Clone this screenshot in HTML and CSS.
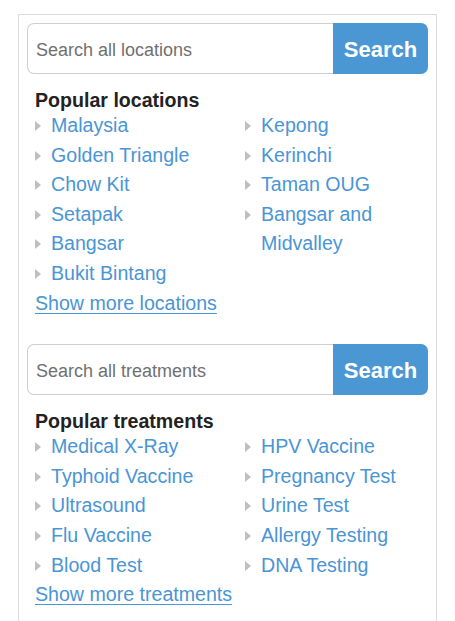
FILE: index.html
```html
<!DOCTYPE html>
<html lang="en">
<head>
<meta charset="utf-8">
<title>Popular locations and treatments</title>
<link rel="stylesheet" href="styles.css">
</head>
<body>
<div class="panel">
  <section class="block">
    <form class="search">
      <input class="search-input" type="text" placeholder="Search all locations">
      <button class="search-btn" type="button">Search</button>
    </form>
    <h2 class="heading">Popular locations</h2>
    <div class="cols">
      <ul class="col col-left">
        <li><a href="#">Malaysia</a></li>
        <li><a href="#">Golden Triangle</a></li>
        <li><a href="#">Chow Kit</a></li>
        <li><a href="#">Setapak</a></li>
        <li><a href="#">Bangsar</a></li>
        <li><a href="#">Bukit Bintang</a></li>
      </ul>
      <ul class="col col-right">
        <li><a href="#">Kepong</a></li>
        <li><a href="#">Kerinchi</a></li>
        <li><a href="#">Taman OUG</a></li>
        <li><a href="#">Bangsar and Midvalley</a></li>
      </ul>
    </div>
    <a class="more" href="#">Show more locations</a>
  </section>
  <section class="block">
    <form class="search">
      <input class="search-input" type="text" placeholder="Search all treatments">
      <button class="search-btn" type="button">Search</button>
    </form>
    <h2 class="heading">Popular treatments</h2>
    <div class="cols">
      <ul class="col col-left">
        <li><a href="#">Medical X-Ray</a></li>
        <li><a href="#">Typhoid Vaccine</a></li>
        <li><a href="#">Ultrasound</a></li>
        <li><a href="#">Flu Vaccine</a></li>
        <li><a href="#">Blood Test</a></li>
      </ul>
      <ul class="col col-right">
        <li><a href="#">HPV Vaccine</a></li>
        <li><a href="#">Pregnancy Test</a></li>
        <li><a href="#">Urine Test</a></li>
        <li><a href="#">Allergy Testing</a></li>
        <li><a href="#">DNA Testing</a></li>
      </ul>
    </div>
    <a class="more" href="#">Show more treatments</a>
  </section>
</div>
</body>
</html>
```

FILE: styles.css
```css
* { box-sizing: border-box; }

html, body {
  margin: 0;
  padding: 0;
  background: #fff;
  font-family: "Liberation Sans", Arial, sans-serif;
}

.panel {
  margin: 14px 0 0 18px;
  width: 419px;
  min-height: 640px;
  border: 1px solid #dcdcdc;
  border-bottom: none;
  padding: 8px 8px 0 8px;
}

.block {
  display: flex;
  flex-direction: column;
  margin-bottom: 26px;
}

.search {
  display: flex;
  height: 51px;
  margin: 0;
}

.search-input {
  flex: 1;
  min-width: 0;
  height: 51px;
  border: 1px solid #cfcfcf;
  border-right: none;
  border-radius: 7px 0 0 7px;
  padding: 3px 0 0 8px;
  font-family: "Liberation Sans", Arial, sans-serif;
  font-size: 18px;
  color: #333;
  outline: none;
  background: #fff;
}

.search-input::placeholder {
  color: #707070;
  opacity: 1;
}

.search-btn {
  width: 95px;
  height: 51px;
  border: none;
  border-radius: 0 7px 7px 0;
  background: #4a97d4;
  color: #fff;
  font-family: "Liberation Sans", Arial, sans-serif;
  font-weight: bold;
  font-size: 22px;
  padding: 2px 0 0 0;
  cursor: pointer;
}

.heading {
  margin: 15px 0 0 0;
  padding-left: 8px;
  font-size: 19.6px;
  line-height: 22px;
  font-weight: bold;
  color: #222;
}

.cols {
  display: flex;
  padding-left: 8px;
}

.col {
  list-style: none;
  margin: 0;
  padding: 0;
}

.col-left {
  width: 210px;
  flex: none;
}

.col-right {
  flex: 1;
  min-width: 0;
}

.col li {
  display: flex;
  align-items: flex-start;
  font-size: 19.6px;
  line-height: 29.6px;
}

.col li::before {
  content: "";
  flex: none;
  width: 0;
  height: 0;
  margin-top: 10px;
  margin-right: 10px;
  border-left: 6px solid #bfbfbf;
  border-top: 5px solid transparent;
  border-bottom: 5px solid transparent;
}

.col a {
  color: #4a95d5;
  text-decoration: none;
}

.more {
  align-self: flex-start;
  margin-left: 8px;
  font-size: 19.6px;
  line-height: 29.6px;
  color: #4a95d5;
  text-decoration: underline;
  text-underline-offset: 3px;
}
```
